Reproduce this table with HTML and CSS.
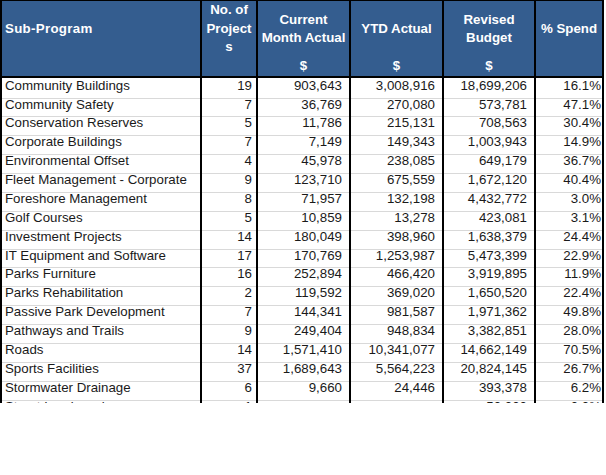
FILE: index.html
```html
<!DOCTYPE html>
<html>
<head>
<meta charset="utf-8">
<link rel="stylesheet" href="styles.css">
</head>
<body>
<div class="sheet">
<table class="report">
<colgroup>
<col class="c-name"><col class="c-num"><col class="c-cur"><col class="c-ytd"><col class="c-bud"><col class="c-pct">
</colgroup>
<thead>
<tr class="h-title">
<th class="left">Sub-Program</th>
<th>No. of<br>Project<br>s</th>
<th>Current<br>Month Actual</th>
<th>YTD Actual</th>
<th>Revised<br>Budget</th>
<th>% Spend</th>
</tr>
<tr class="h-unit">
<th></th><th></th><th>$</th><th>$</th><th>$</th><th></th>
</tr>
</thead>
<tbody>
<tr class="first"><td class="name">Community Buildings</td><td class="n">19</td><td class="m">903,643</td><td class="m">3,008,916</td><td class="m">18,699,206</td><td class="p">16.1%</td></tr>
<tr><td class="name">Community Safety</td><td class="n">7</td><td class="m">36,769</td><td class="m">270,080</td><td class="m">573,781</td><td class="p">47.1%</td></tr>
<tr><td class="name">Conservation Reserves</td><td class="n">5</td><td class="m">11,786</td><td class="m">215,131</td><td class="m">708,563</td><td class="p">30.4%</td></tr>
<tr><td class="name">Corporate Buildings</td><td class="n">7</td><td class="m">7,149</td><td class="m">149,343</td><td class="m">1,003,943</td><td class="p">14.9%</td></tr>
<tr><td class="name">Environmental Offset</td><td class="n">4</td><td class="m">45,978</td><td class="m">238,085</td><td class="m">649,179</td><td class="p">36.7%</td></tr>
<tr><td class="name">Fleet Management - Corporate</td><td class="n">9</td><td class="m">123,710</td><td class="m">675,559</td><td class="m">1,672,120</td><td class="p">40.4%</td></tr>
<tr><td class="name">Foreshore Management</td><td class="n">8</td><td class="m">71,957</td><td class="m">132,198</td><td class="m">4,432,772</td><td class="p">3.0%</td></tr>
<tr><td class="name">Golf Courses</td><td class="n">5</td><td class="m">10,859</td><td class="m">13,278</td><td class="m">423,081</td><td class="p">3.1%</td></tr>
<tr><td class="name">Investment Projects</td><td class="n">14</td><td class="m">180,049</td><td class="m">398,960</td><td class="m">1,638,379</td><td class="p">24.4%</td></tr>
<tr><td class="name">IT Equipment and Software</td><td class="n">17</td><td class="m">170,769</td><td class="m">1,253,987</td><td class="m">5,473,399</td><td class="p">22.9%</td></tr>
<tr><td class="name">Parks Furniture</td><td class="n">16</td><td class="m">252,894</td><td class="m">466,420</td><td class="m">3,919,895</td><td class="p">11.9%</td></tr>
<tr><td class="name">Parks Rehabilitation</td><td class="n">2</td><td class="m">119,592</td><td class="m">369,020</td><td class="m">1,650,520</td><td class="p">22.4%</td></tr>
<tr><td class="name">Passive Park Development</td><td class="n">7</td><td class="m">144,341</td><td class="m">981,587</td><td class="m">1,971,362</td><td class="p">49.8%</td></tr>
<tr><td class="name">Pathways and Trails</td><td class="n">9</td><td class="m">249,404</td><td class="m">948,834</td><td class="m">3,382,851</td><td class="p">28.0%</td></tr>
<tr><td class="name">Roads</td><td class="n">14</td><td class="m">1,571,410</td><td class="m">10,341,077</td><td class="m">14,662,149</td><td class="p">70.5%</td></tr>
<tr><td class="name">Sports Facilities</td><td class="n">37</td><td class="m">1,689,643</td><td class="m">5,564,223</td><td class="m">20,824,145</td><td class="p">26.7%</td></tr>
<tr><td class="name">Stormwater Drainage</td><td class="n">6</td><td class="m">9,660</td><td class="m">24,446</td><td class="m">393,378</td><td class="p">6.2%</td></tr>
<tr><td class="name">Street Landscaping</td><td class="n">1</td><td class="m"></td><td class="m"></td><td class="m">50,000</td><td class="p">0.0%</td></tr>
</tbody>
</table>
</div>
</body>
</html>
```
FILE: styles.css
```css
html, body {
  margin: 0;
  padding: 0;
  background: #ffffff;
}

.sheet {
  width: 606px;
  height: 403px;
  overflow: hidden;
}

.report {
  border-collapse: collapse;
  table-layout: fixed;
  width: 602px;
  font-family: "Liberation Sans", Arial, sans-serif;
  font-size: 13.3px;
  color: #1a1a1a;
  border-top: 1px solid #000;
  border-left: 1px solid #000;
}

.c-name { width: 200px; }
.c-num { width: 56px; }
.c-cur { width: 93px; }
.c-ytd { width: 93px; }
.c-bud { width: 92px; }
.c-pct { width: 68px; }

.report th {
  background: #345d8f;
  color: #ffffff;
  font-weight: bold;
  font-size: 13.3px;
  line-height: 18.5px;
  text-align: center;
  vertical-align: middle;
  padding: 0 1px;
  border-left: 2px solid #000;
  border-right: 2px solid #000;
  white-space: nowrap;
}

.report th.left {
  text-align: left;
  padding-left: 3px;
  letter-spacing: 0.3px;
}

.h-title th {
  height: 56px;
}

.h-unit th {
  height: 16px;
  border-bottom: 2px solid #000;
  vertical-align: middle;
}

.report td {
  height: 17.875px;
  padding: 0;
  line-height: 12px;
  vertical-align: top;
  border-left: 2px solid #000;
  border-right: 2px solid #000;
  border-bottom: 1px solid #d9d9d9;
  white-space: nowrap;
  overflow: hidden;
}

.report tr.first td {
  height: 18px;
  padding-top: 2px;
}

.report td.name {
  text-align: left;
  padding-left: 3px;
}

.report td.n {
  text-align: right;
  padding-right: 4px;
}

.report td.m {
  text-align: right;
  padding-right: 7px;
}

.report td.p {
  text-align: right;
  padding-right: 1px;
}
```
